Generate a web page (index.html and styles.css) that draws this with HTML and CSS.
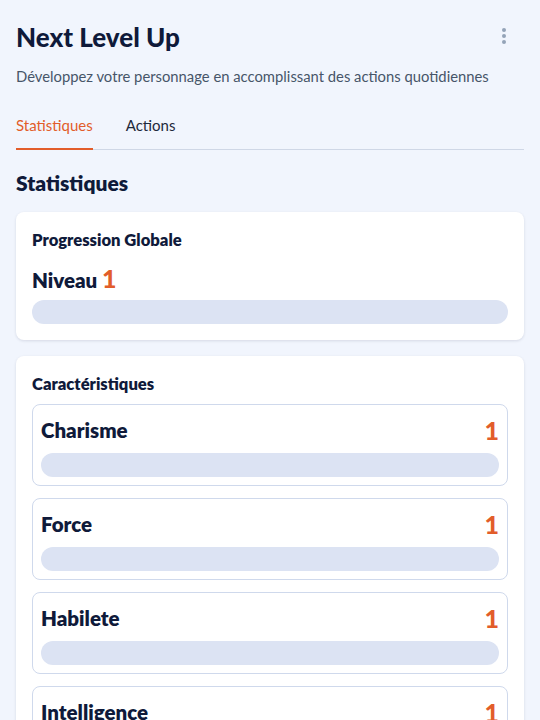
FILE: index.html
```html
<!DOCTYPE html>
<html lang="fr">
<head>
<meta charset="utf-8">
<title>Next Level Up</title>
<link rel="stylesheet" href="styles.css">
</head>
<body>
<div class="app">
  <header class="header">
    <h1 class="title">Next Level Up</h1>
    <button class="menu" aria-label="Menu">
      <svg width="6" height="18" viewBox="0 0 6 18"><circle cx="3" cy="3" r="2" fill="#94a3b8"/><circle cx="3" cy="9" r="2" fill="#94a3b8"/><circle cx="3" cy="15" r="2" fill="#94a3b8"/></svg>
    </button>
  </header>
  <p class="subtitle">Développez votre personnage en accomplissant des actions quotidiennes</p>
  <nav class="tabs">
    <span class="tab active">Statistiques</span>
    <span class="tab">Actions</span>
  </nav>
  <h2 class="section-title">Statistiques</h2>
  <section class="card">
    <h3 class="card-title">Progression Globale</h3>
    <div class="level">Niveau <span class="num">1</span></div>
    <div class="bar"></div>
  </section>
  <section class="card">
    <h3 class="card-title">Caractéristiques</h3>
    <div class="stats">
      <div class="stat">
        <div class="stat-head"><span class="stat-name">Charisme</span><span class="num">1</span></div>
        <div class="bar"></div>
      </div>
      <div class="stat">
        <div class="stat-head"><span class="stat-name">Force</span><span class="num">1</span></div>
        <div class="bar"></div>
      </div>
      <div class="stat">
        <div class="stat-head"><span class="stat-name">Habilete</span><span class="num">1</span></div>
        <div class="bar"></div>
      </div>
      <div class="stat">
        <div class="stat-head"><span class="stat-name">Intelligence</span><span class="num">1</span></div>
        <div class="bar"></div>
      </div>
    </div>
  </section>
</div>
</body>
</html>
```

FILE: styles.css
```css
* { box-sizing: border-box; }
html, body { margin: 0; padding: 0; }
body {
  background: #f1f5fd;
  font-family: "Lato", "Noto Sans", sans-serif;
  color: #0f1a3a;
}
.app { padding: 20px 16px 16px; }
.header {
  display: flex;
  justify-content: space-between;
  align-items: flex-start;
}
.title {
  margin: 0;
  font-size: 26px;
  line-height: 34px;
  font-weight: 900;
  color: #0f1a3a;
}
.menu {
  border: 0;
  background: none;
  padding: 0;
  margin: 7px 17px 0 0;
  display: flex;
}
.subtitle {
  margin: 12px 0 0;
  font-size: 14.8px;
  line-height: 20px;
  color: #475569;
}
.tabs {
  margin-top: 29px;
  display: flex;
  gap: 33px;
  border-bottom: 1px solid #cfd7e6;
}
.tab {
  font-size: 15px;
  line-height: 20px;
  padding-bottom: 13px;
  color: #1e293b;
}
.tab.active {
  color: #e25d2a;
  border-bottom: 2px solid #e25d2a;
  margin-bottom: -1px;
}
.section-title {
  margin: 21px 0 0;
  font-size: 21px;
  line-height: 24px;
  font-weight: 800;
}
.card {
  margin-top: 17px;
  background: #fff;
  border-radius: 8px;
  box-shadow: 0 1px 3px rgba(15, 26, 58, 0.12);
  padding: 18px 16px 16px;
}
.card + .card { margin-top: 16px; }
.card-title {
  margin: 0;
  font-size: 16.6px;
  line-height: 20px;
  font-weight: 800;
}
.level {
  margin-top: 16px;
  font-size: 20.5px;
  line-height: 24px;
  height: 24px;
  font-weight: 800;
}
.num {
  color: #e25d2a;
  font-size: 25px;
  line-height: 24px;
  font-weight: 900;
}
.bar {
  height: 24px;
  border-radius: 12px;
  background: #dce3f3;
}
.level + .bar { margin-top: 10px; }
.stats {
  margin-top: 10px;
  display: flex;
  flex-direction: column;
  gap: 12px;
}
.stat {
  border: 1px solid #cfd9ec;
  border-radius: 8px;
  padding: 12px 8px 8px;
}
.stat-head {
  display: flex;
  justify-content: space-between;
  align-items: center;
  height: 26px;
  line-height: 26px;
}
.stat-name {
  font-size: 20.5px;
  font-weight: 800;
}
.stat .bar { margin-top: 10px; }
```
